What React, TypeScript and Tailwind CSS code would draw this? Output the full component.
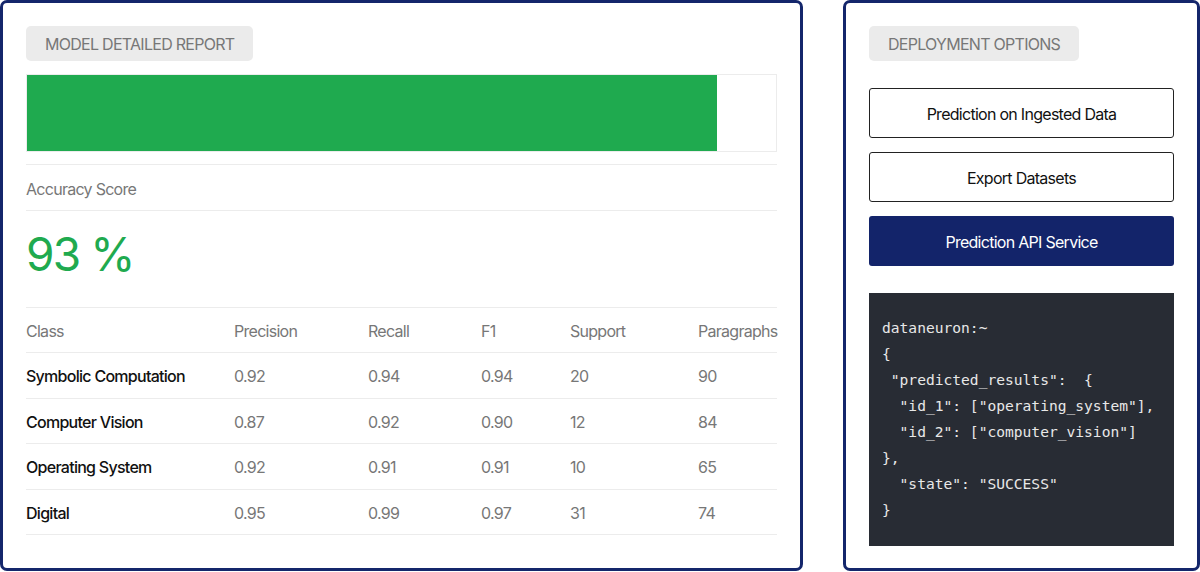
import React from "react";

const rows = [
  ["Symbolic Computation", "0.92", "0.94", "0.94", "20", "90"],
  ["Computer Vision", "0.87", "0.92", "0.90", "12", "84"],
  ["Operating System", "0.92", "0.91", "0.91", "10", "65"],
  ["Digital", "0.95", "0.99", "0.97", "31", "74"],
];

const codeLines = [
  "dataneuron:~",
  "{",
  ' "predicted_results":  {',
  '  "id_1": ["operating_system"],',
  '  "id_2": ["computer_vision"]',
  "},",
  '  "state": "SUCCESS"',
  "}",
];

export default function App() {
  return (
    <div
      className="w-[1200px] h-[572px] bg-white flex gap-[40px] overflow-hidden tracking-[-0.045em]"
      style={{ fontFamily: "Inter, 'Noto Sans', sans-serif" }}
    >
      {/* Left panel */}
      <div className="w-[803px] h-[571px] border-[3px] border-[#14266b] rounded-[7px] px-[23px] pt-[23px] flex flex-col">
        <div className="self-start h-[35px] px-[19px] pt-[1px] bg-[#ebebeb] rounded-[5px] flex items-center text-[16px] text-[#777]">
          MODEL DETAILED REPORT
        </div>
        <div className="mt-[13px] h-[78px] border border-[#ececec] flex">
          <div className="w-[690px] h-full bg-[#1faa4f]" />
        </div>
        <div className="mt-[12px] border-t border-[#ececec] h-[46px] pt-[3px] flex items-center text-[16px] text-[#777]">
          Accuracy Score
        </div>
        <div className="border-t border-[#ececec] h-[97px] flex items-center pb-[10px] text-[46px] leading-none tracking-[-0.04em] text-[#1faa4f]">
          93 %
        </div>
        <div className="border-t border-[#ececec]">
          <div className="grid grid-cols-[208px_134px_113px_89px_128px_1fr] h-[45px] pt-[2px] items-center border-b border-[#ececec] text-[16px] text-[#777]">
            <div>Class</div>
            <div>Precision</div>
            <div>Recall</div>
            <div>F1</div>
            <div>Support</div>
            <div>Paragraphs</div>
          </div>
          {rows.map((r) => (
            <div
              key={r[0]}
              className="grid grid-cols-[208px_134px_113px_89px_128px_1fr] h-[45.5px] pt-[2px] items-center border-b border-[#ececec] text-[16px] text-[#777]"
            >
              <div className="text-[#111] font-medium">{r[0]}</div>
              <div>{r[1]}</div>
              <div>{r[2]}</div>
              <div>{r[3]}</div>
              <div>{r[4]}</div>
              <div>{r[5]}</div>
            </div>
          ))}
        </div>
      </div>

      {/* Right panel */}
      <div className="w-[357px] h-[571px] border-[3px] border-[#14266b] rounded-[7px] px-[23px] pt-[23px] flex flex-col">
        <div className="self-start h-[35px] px-[19px] pt-[1px] bg-[#ebebeb] rounded-[5px] flex items-center text-[16px] text-[#777]">
          DEPLOYMENT OPTIONS
        </div>
        <div className="mt-[27px] flex flex-col gap-[14px]">
          <div className="h-[50px] pt-[1px] border-[1.5px] border-[#222] rounded-[3px] flex items-center justify-center text-[16px] text-[#111]">
            Prediction on Ingested Data
          </div>
          <div className="h-[50px] pt-[1px] border-[1.5px] border-[#222] rounded-[3px] flex items-center justify-center text-[16px] text-[#111]">
            Export Datasets
          </div>
          <div className="h-[50px] pt-[1px] bg-[#13246a] rounded-[3px] flex items-center justify-center text-[16px] text-white">
            Prediction API Service
          </div>
        </div>
        <div
          className="mt-[27px] h-[253px] bg-[#282c34] pl-[13px] pt-[22px] text-[14.6px] leading-[26px] tracking-normal text-[#e8e8e8] whitespace-pre"
          style={{ fontFamily: "'DejaVu Sans Mono', monospace" }}
        >
          {codeLines.map((l, i) => (
            <div key={i}>{l}</div>
          ))}
        </div>
      </div>
    </div>
  );
}
